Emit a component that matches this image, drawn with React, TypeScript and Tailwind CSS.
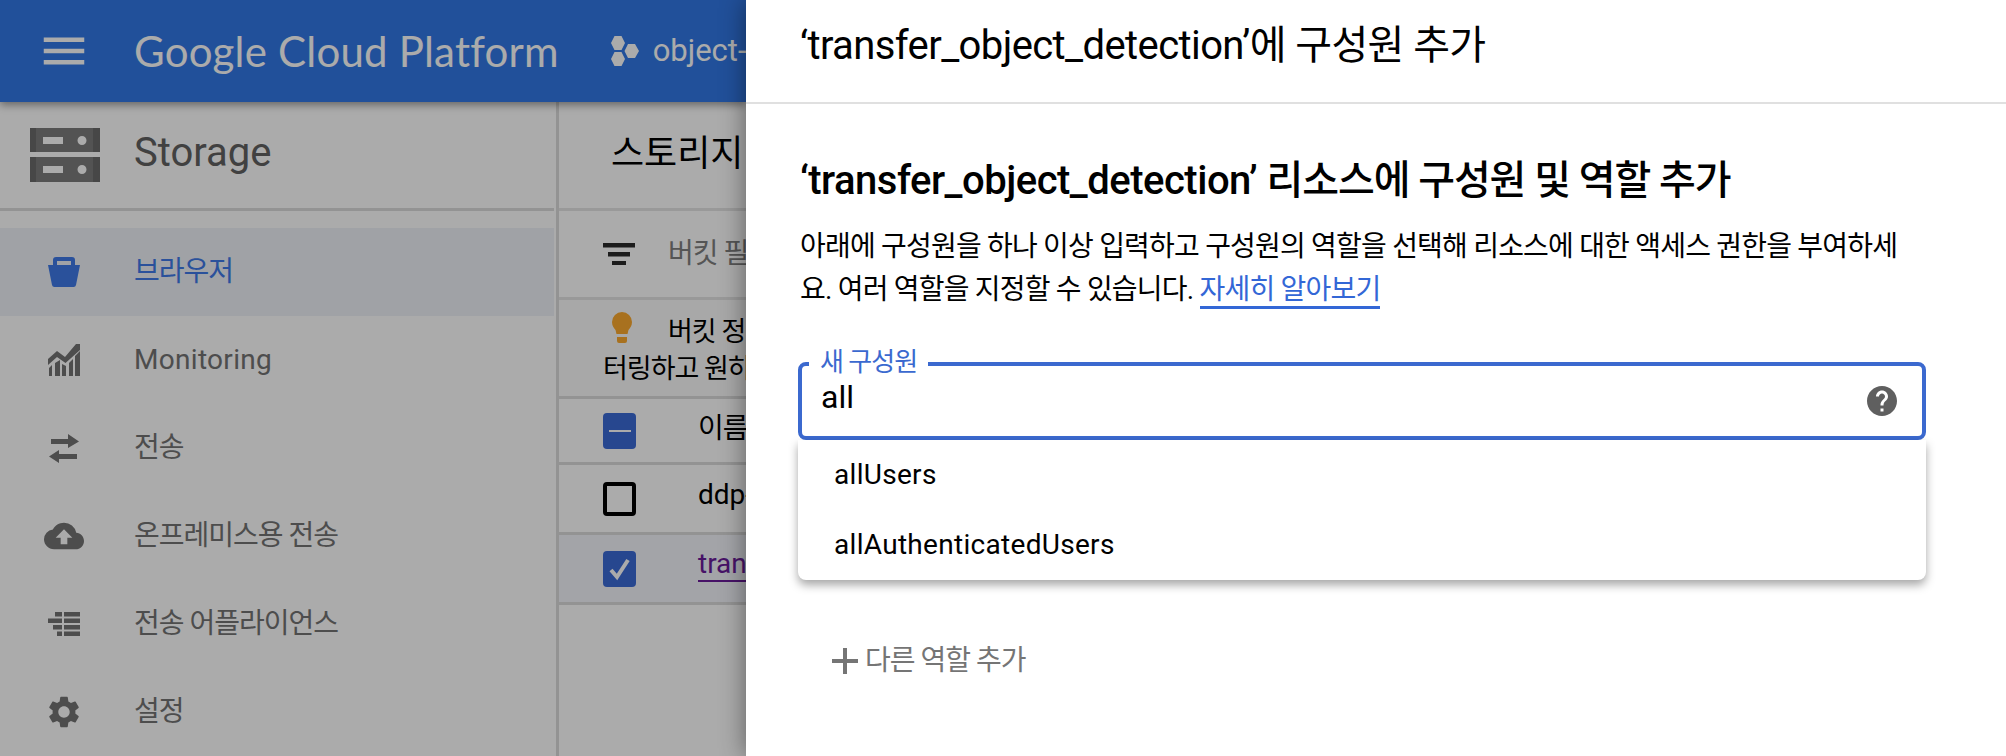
import React from "react";
import { MdCloudUpload, MdHelp, MdMenu, MdSettings } from "react-icons/md";

const BucketIcon = () => (
  <svg width="32" height="30" viewBox="0 0 32 30" fill="#3f7ae8">
    <path fillRule="evenodd" d="M5 8V3a3 3 0 0 1 3-3h16a3 3 0 0 1 3 3v5h5l-4 20a2.500 2.500 0 0 1-2.500 2h-19A2.500 2.500 0 0 1 4 28L0 8h5zM9 4v4h14V4H9z" />
  </svg>
);

const ChartIcon = () => (
  <svg width="32" height="32" viewBox="0 0 32 32" fill="#737373">
    <path d="M0 15l9-8 8 6L28 0h4v6L17.500 19 9 13l-9 8zM1 24l3-3v11H1zM7 19l5-3v16H7zM14 20l4 2v10h-4zM21 19l4-4v17h-4zM27 12l5-5v25h-5z" />
  </svg>
);

const TransferIcon = () => (
  <svg width="32" height="32" viewBox="0 0 32 32" fill="#737373">
    <path d="M3 7h17V2l11 7.500L20 16v-4H3zM29 27H11v4L1 24.500 11 18v4h18z" />
  </svg>
);

const ComplianceIcon = () => (
  <svg width="32" height="24" viewBox="0 0 32 24" fill="#737373">
    <path d="M7 0h7v4.500H7zM16 0h16v4.500H16zM0 6.500h14V11H0zM16 6.500h16V11H16zM5 13h9v4.500H5zM16 13h16v4.500H16zM9 19.500h5V24H9zM16 19.500h16V24H16z" />
  </svg>
);

const StorageIcon = () => (
  <svg width="70" height="54" viewBox="0 0 70 54" className="shrink-0">
    <path fill="#7c7c7c" fillRule="evenodd" d="M0 0h70v24H0zM13 9v7h20V9zM52 8a4.500 4.500 0 1 0 0 9 4.500 4.500 0 0 0 0-9zM0 29h70v25H0zM13 38v7h20v-7zM52 37a4.500 4.500 0 1 0 0 9 4.500 4.500 0 0 0 0-9z" />
    <path fill="#6a6a6a" d="M0 0h6v24H0zM0 29h6v25H0zM63 0h7v24h-7zM63 29h7v25h-7z" />
  </svg>
);

const ProjectIcon = () => (
  <svg width="28" height="30" viewBox="0 0 28 30" fill="#ffffff" className="shrink-0">
    <path d="M3.500 0h7L14 7l-3.500 7h-7L0 7zM17 8h7l4 7-4 7h-7l-3.500-7zM3.500 16h7L14 23l-3.500 7h-7L0 23z" />
  </svg>
);

const FilterIcon = () => (
  <svg width="32" height="22" viewBox="0 0 32 22" fill="#2b2b2b" className="shrink-0">
    <path d="M0 0h32v4.500H0zM5 9h22v4.500H5zM9 18h14v4.500H9z" />
  </svg>
);

const BulbIcon = () => (
  <svg width="20" height="31" viewBox="0 0 20 31" fill="#fba92f" className="ml-[9px] shrink-0">
    <path d="M10 0a10 10 0 0 1 10 10c0 4-2 6-3.500 8-.500 1-.500 3-1 4h-11c-.500-1-.500-3-1-4C2 16 0 14 0 10A10 10 0 0 1 10 0zM5 25h10v4a2 2 0 0 1-2 2H7a2 2 0 0 1-2-2z" />
  </svg>
);

const navItems = [
  { label: "브라우저", icon: <BucketIcon />, active: true },
  { label: "Monitoring", icon: <ChartIcon />, latin: true },
  { label: "전송", icon: <TransferIcon /> },
  { label: "온프레미스용 전송", icon: <MdCloudUpload size={40} color="#737373" /> },
  { label: "전송 어플라이언스", icon: <ComplianceIcon /> },
  { label: "설정", icon: <MdSettings size={38} color="#737373" /> },
];

const Background = () => (
  <div className="relative h-full w-[746px] shrink-0 overflow-hidden bg-white">
    {/* Top bar */}
    <div className="relative z-10 flex h-[102px] w-[746px] items-center whitespace-nowrap bg-[#3278e6] shadow-[0_3px_8px_rgba(0,0,0,0.4)]">
      <div className="ml-[37px] flex w-[54px] shrink-0 justify-center">
        <MdMenu size={54} color="#ffffff" />
      </div>
      <span className="ml-[43px] shrink-0 font-['Lato',sans-serif] text-[42px] tracking-[0.2px] text-white">Google Cloud Platform</span>
      <div className="ml-[52px] flex shrink-0 items-center gap-[14px]">
        <ProjectIcon />
        <span className="text-[31px] text-white">object-detection</span>
      </div>
    </div>

    <div className="flex h-[654px] w-[1400px]">
      {/* Sidebar */}
      <div className="w-[554px] shrink-0">
        <div className="flex h-[109px] items-center border-b-[3px] border-[#dcdcdc] pl-[30px]">
          <StorageIcon />
          <span className="ml-[34px] pb-[5px] text-[40px] text-[#616161]">Storage</span>
        </div>
        <div className="pt-[17px]">
          {navItems.map((item) => (
            <div
              key={item.label}
              className={`flex h-[88px] items-center ${item.active ? "bg-[#eff2f8]" : ""}`}
            >
              <div className="flex w-[128px] shrink-0 justify-center">{item.icon}</div>
              <span
                className={`ml-[6px] text-[28px] ${item.latin ? "tracking-[0.3px]" : "tracking-[-1px]"} ${
                  item.active ? "text-[#3f7ae8]" : "text-[#737373]"
                }`}
              >
                {item.label}
              </span>
            </div>
          ))}
        </div>
      </div>

      {/* Bucket list */}
      <div className="ml-[2px] w-[800px] shrink-0 border-l-[3px] border-[#dcdcdc] whitespace-nowrap">
        <div className="flex h-[109px] items-center border-b-[3px] border-[#e4e4e4] pb-[2px] pl-[52px]">
          <span className="text-[36px] text-black">스토리지 브라우저</span>
        </div>
        <div className="flex h-[89px] items-center gap-[33px] border-b-[3px] border-[#e4e4e4] pl-[44px]">
          <FilterIcon />
          <span className="text-[28px] tracking-[-1px] text-[#7f7f7f]">버킷 필터링</span>
        </div>
        <div className="h-[99px] border-b-[3px] border-[#dcdcdc] bg-[#fbfbfb] pl-[44px] pt-[12px]">
          <div className="flex items-start gap-[36px]">
            <BulbIcon />
            <span className="text-[27px] tracking-[-1px] text-black">버킷 정책을 사용하여 필</span>
          </div>
          <div className="mt-[-4px] text-[27px] tracking-[-1px] text-black">터링하고 원하는 버킷을</div>
        </div>
        <div className="flex h-[66px] items-center border-b-[3px] border-[#dcdcdc] pl-[44px]">
          <div className="flex h-[36px] w-[33px] shrink-0 items-center justify-center rounded-[4px] bg-[#3b6ad6]">
            <div className="h-[2px] w-[22px] bg-white" />
          </div>
          <span className="ml-[62px] pb-[4px] text-[28px] tracking-[-1px] text-black">이름</span>
        </div>
        <div className="flex h-[70px] items-center border-b-[3px] border-[#dcdcdc] pl-[44px]">
          <div className="h-[34px] w-[33px] shrink-0 rounded-[4px] border-[4px] border-black" />
          <span className="ml-[62px] pb-[8px] text-[28px] text-black">ddp-demo</span>
        </div>
        <div className="flex h-[70px] items-center border-b-[3px] border-[#dcdcdc] bg-[#f4f5fb] pl-[44px]">
          <div className="flex h-[36px] w-[33px] shrink-0 items-center justify-center rounded-[4px] bg-[#3b6ad6]">
            <svg width="22" height="24" viewBox="0 0 22 24" fill="none" stroke="#ffffff" strokeWidth="4">
              <path d="M2 13l6 7L19 3" />
            </svg>
          </div>
          <span className="mb-[8px] ml-[62px] border-b-[2px] border-[#6a1b9a] text-[28px] leading-[33px] text-[#6a1b9a]">transfer_object_detection</span>
        </div>
      </div>
    </div>

    {/* Scrim over the page */}
    <div className="absolute inset-0 z-20 bg-black/[0.33]" />
  </div>
);

const Panel = () => (
  <div className="relative z-30 h-full w-[1260px] shrink-0 bg-white pl-[54px] shadow-[0_0_24px_rgba(0,0,0,0.45)]">
    <div className="-ml-[54px] flex h-[104px] items-center whitespace-pre border-b-2 border-[#e0e0e0] pb-[10px] pl-[54px] text-[40px] tracking-[-0.6px] text-black">
      ‘transfer_object_detection’에 구성원 추가
    </div>
    <h2 className="mt-[54px] text-[40px] leading-[46px] font-medium tracking-[-0.5px] text-black">
      ‘transfer_object_detection’ <span className="tracking-[-1.1px]">리소스에 구성원 및 역할 추가</span>
    </h2>
    <p className="mt-[21px] w-[1110px] text-[28px] leading-[43px] tracking-[-0.8px] text-black">
      아래에 구성원을 하나 이상 입력하고 구성원의 역할을 선택해 리소스에 대한 액세스 권한을 부여하세요. 여러 역할을 지정할 수 있습니다.{" "}
      <a className="border-b-[3px] border-[#3367d6] text-[#3367d6]">자세히 알아보기</a>
    </p>

    <div className="relative mt-[51px] w-[1128px] -translate-x-[2px]">
      <div className="flex h-[78px] items-center justify-between rounded-[8px] border-[4px] border-[#3b69cf] pl-[19px] pr-[22px]">
        <span className="pb-[8px] text-[32px] text-black">all</span>
        <MdHelp size={36} color="#5f5f5f" />
      </div>
      <span className="absolute -top-[14px] left-[11px] bg-white px-[11px] text-[26px] leading-[28px] tracking-[-1px] text-[#3b69cf]">
        새 구성원
      </span>
      {/* Autocomplete menu */}
      <div className="absolute left-0 right-0 top-[78px] flex h-[140px] flex-col rounded-b-[8px] bg-white pl-[36px] text-[28px] tracking-[0.3px] text-black shadow-[0_5px_10px_rgba(0,0,0,0.35)]">
        <div className="flex h-[70px] items-center">allUsers</div>
        <div className="flex h-[70px] items-center">allAuthenticatedUsers</div>
      </div>
    </div>

    <div className="mt-[200px] flex items-center text-[28px] tracking-[-1px] text-[#757575]">
      <svg width="26" height="26" viewBox="0 0 26 26" fill="#757575" className="ml-[32px]">
        <path d="M11 0h4v11h11v4H15v11h-4V15H0v-4h11z" />
      </svg>
      <span className="ml-[7px]">다른 역할 추가</span>
    </div>
  </div>
);

export default function App() {
  return (
    <div className="flex h-[756px] w-[2006px] overflow-hidden font-['Roboto','Noto_Sans_CJK_KR',sans-serif]">
      <Background />
      <Panel />
    </div>
  );
}
